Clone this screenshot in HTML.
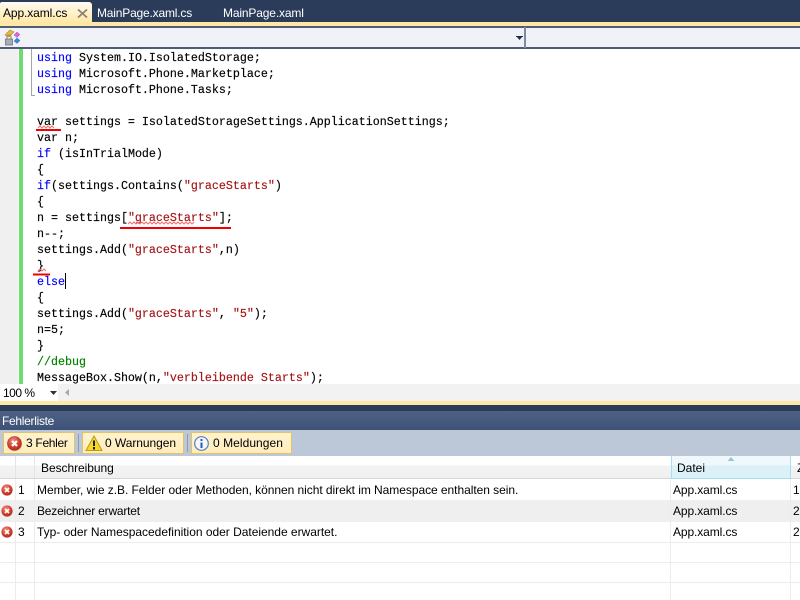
<!DOCTYPE html>
<html><head><meta charset="utf-8"><style>
html,body{margin:0;padding:0}
body{width:800px;height:600px;overflow:hidden;position:relative;background:#fff;font-family:"Liberation Sans",sans-serif;font-size:12px;color:#000}
.a{position:absolute}
.t{position:absolute;white-space:pre;line-height:16px}
.c{position:absolute;left:37px;white-space:pre;font-family:"Liberation Mono",monospace;font-size:11.67px;line-height:16px;height:16px;color:#000;-webkit-text-stroke:.15px currentColor}
.k{color:#0000ff}.s{color:#a31515}.g{color:#008000}
.btn{position:absolute;top:432px;height:22px;background:linear-gradient(#fff3cf,#ffecbd);border:1px solid #e5c365;box-sizing:border-box}
.hl{position:absolute;left:0;width:800px;height:1px;background:#ececec}
.vl{position:absolute;width:1px;top:479px;height:121px;background:#ececec}
.f{letter-spacing:-.1px}
</style></head><body>
<div class="a" style="left:0;top:0;width:800px;height:22px;background:#2b3c5a"></div>
<div class="a" style="left:0;top:22px;width:800px;height:4px;background:#ffe8a6"></div>
<div class="a" style="left:0;top:2px;width:92px;height:20px;background:linear-gradient(#fffcf4,#ffe8a6);border-radius:2px 3px 0 0"></div>
<div class="t f" style="left:3px;top:5px;color:#000">App.xaml.cs</div>
<svg class="a" style="left:77px;top:8px" width="11" height="11"><path d="M1 1.5L10 9.5M10 1.5L1 9.5" stroke="#8c8270" stroke-width="1.8"/></svg>
<div class="t" style="left:97px;top:5px;color:#fff;letter-spacing:-.19px">MainPage.xaml.cs</div>
<div class="t" style="left:223px;top:5px;color:#fff;letter-spacing:-.15px">MainPage.xaml</div>

<div class="a" style="left:0;top:26px;width:800px;height:23px;background:#f0f2f8;border-top:2px solid #4e5c7a;border-bottom:2px solid #4e5c7a;box-sizing:border-box"></div>
<div class="a" style="left:524px;top:27px;width:2px;height:21px;background:#7f8aa3"></div>
<svg class="a" style="left:516px;top:36px" width="7" height="5"><path d="M0 0H7V1H6L3.5 4L1 1H0Z" fill="#1f2a44"/></svg>
<svg class="a" style="left:4px;top:29px" width="18" height="17">
<path d="M1 6L6 1L10 3L5 8Z" fill="#eebb30" stroke="#b08a20" stroke-width=".6"/>
<path d="M13 3l3 2.5-3 3-3-2.5Z" fill="#d868d8" stroke="#a040a0" stroke-width=".4"/>
<path d="M13 9l3 2.5-3 3-3-2.5Z" fill="#3a8ad8" stroke="#2060a0" stroke-width=".4"/>
<rect x="1.5" y="10" width="7" height="6" fill="#a8aeb6" stroke="#666" stroke-width=".7"/>
<path d="M3 10V8a2 2 0 0 1 4 0v2" fill="none" stroke="#808080" stroke-width="1"/>
</svg>

<div class="a" style="left:0;top:49px;width:18px;height:335px;background:#f0f0f0"></div>
<div class="a" style="left:19px;top:49px;width:4px;height:335px;background:#6fdc6f"></div>
<div class="a" style="left:31px;top:49px;width:1px;height:47px;background:#a5a5a5"></div>
<div class="a" style="left:31px;top:95px;width:4px;height:1px;background:#a5a5a5"></div>

<div class="c" style="top:50px"><span class="k">using</span> System.IO.IsolatedStorage;</div>
<div class="c" style="top:66px"><span class="k">using</span> Microsoft.Phone.Marketplace;</div>
<div class="c" style="top:82px"><span class="k">using</span> Microsoft.Phone.Tasks;</div>
<div class="c" style="top:114px">var settings = IsolatedStorageSettings.ApplicationSettings;</div>
<div class="c" style="top:130px">var n;</div>
<div class="c" style="top:146px"><span class="k">if</span> (isInTrialMode)</div>
<div class="c" style="top:162px">{</div>
<div class="c" style="top:178px"><span class="k">if</span>(settings.Contains(<span class="s">"graceStarts"</span>)</div>
<div class="c" style="top:194px">{</div>
<div class="c" style="top:210px">n = settings[<span class="s">"graceStarts"</span>];</div>
<div class="c" style="top:226px">n--;</div>
<div class="c" style="top:242px">settings.Add(<span class="s">"graceStarts"</span>,n)</div>
<div class="c" style="top:258px">}</div>
<div class="c" style="top:274px"><span class="k">else</span></div>
<div class="c" style="top:290px">{</div>
<div class="c" style="top:306px">settings.Add(<span class="s">"graceStarts"</span>, <span class="s">"5"</span>);</div>
<div class="c" style="top:322px">n=5;</div>
<div class="c" style="top:338px">}</div>
<div class="c" style="top:354px"><span class="g">//debug</span></div>
<div class="c" style="top:370px">MessageBox.Show(n,<span class="s">"verbleibende Starts"</span>);</div>
<div class="a" style="left:65px;top:273px;width:1px;height:16px;background:#000"></div>

<svg class="a" style="left:0;top:48px" width="300" height="260">
<path d="M38 80l2 -2 2 2 2 -2 2 2 2 -2 2 2 2 -2 2 2" fill="none" stroke="#ee7070" stroke-width="1"/>
<path d="M36 82H61" stroke="#f00000" stroke-width="2"/>
<path d="M128 176l2 -2 2 2 2 -2 2 2 2 -2 2 2 2 -2 2 2 2 -2 2 2 2 -2 2 2 2 -2 2 2 2 -2 2 2 2 -2 2 2 2 -2 2 2 2 -2 2 2 2 -2 2 2 2 -2 2 2 2 -2 2 2 2 -2 2 2 2 -2 2 2 2 -2" fill="none" stroke="#ee7070" stroke-width="1"/>
<path d="M120 180H231" stroke="#f00000" stroke-width="2"/>
<path d="M38 223l2 -2 2 2 2 -2 2 2" fill="none" stroke="#ee7070" stroke-width="1"/>
<path d="M33 226.5H50" stroke="#f00000" stroke-width="2"/>
</svg>

<div class="a" style="left:0;top:384px;width:800px;height:17px;background:#f2f2f2"></div>
<div class="a" style="left:0;top:384px;width:58px;height:17px;background:#fff"></div>
<div class="t" style="left:3px;top:385px;letter-spacing:-.5px">100 %</div>
<svg class="a" style="left:50px;top:391px" width="7" height="5"><path d="M0 0H7L3.5 4Z" fill="#333"/></svg>
<svg class="a" style="left:65px;top:389px" width="5" height="8"><path d="M4 0V7L0 3.5Z" fill="#a8a8a8"/></svg>

<div class="a" style="left:0;top:401px;width:800px;height:4px;background:#ffe8a6"></div>
<div class="a" style="left:0;top:405px;width:800px;height:6px;background:#2b3c5a"></div>
<div class="a" style="left:0;top:411px;width:800px;height:19px;background:linear-gradient(#4e6185,#3e5278)"></div>
<div class="t" style="left:2px;top:413px;color:#fff;letter-spacing:-.3px">Fehlerliste</div>
<div class="a" style="left:0;top:430px;width:800px;height:26px;background:#bcc7d8"></div>

<svg width="0" height="0" style="position:absolute"><defs><radialGradient id="e" cx=".4" cy=".3" r=".8"><stop offset="0" stop-color="#f09080"/><stop offset=".55" stop-color="#d04030"/><stop offset="1" stop-color="#a82818"/></radialGradient></defs></svg>

<div class="btn" style="left:3px;width:72px"></div>
<svg class="a" style="left:7px;top:436px" width="15" height="15"><circle cx="7.5" cy="7.5" r="7" fill="url(#e)" stroke="#a02c20" stroke-width=".6"/><path d="M5 5L10 10M10 5L5 10" stroke="#fff" stroke-width="2.2"/></svg>
<div class="t" style="left:26px;top:435px;letter-spacing:-.3px">3 Fehler</div>
<div class="a" style="left:78px;top:434px;width:1px;height:18px;background:#8e9bb0"></div>
<div class="btn" style="left:82px;width:102px"></div>
<svg class="a" style="left:85px;top:435px" width="18" height="17"><path d="M9 1L17 15.5H1Z" fill="#f8d820" stroke="#b89a20" stroke-width="1"/><path d="M9 5.5V11M9 12V14.5" stroke="#222" stroke-width="2"/></svg>
<div class="t" style="left:105px;top:435px;letter-spacing:-.05px">0 Warnungen</div>
<div class="a" style="left:187px;top:434px;width:1px;height:18px;background:#8e9bb0"></div>
<div class="btn" style="left:191px;width:101px"></div>
<svg class="a" style="left:194px;top:436px" width="15" height="15"><circle cx="7.5" cy="7.5" r="6.8" fill="#f4f7fc" stroke="#5a80c0" stroke-width="1.2"/><path d="M7.5 3V5M7.5 6.5V12" stroke="#2a5ab0" stroke-width="2"/></svg>
<div class="t" style="left:213px;top:435px;letter-spacing:.05px">0 Meldungen</div>

<div class="a" style="left:0;top:456px;width:800px;height:22px;background:linear-gradient(#fff 0,#fff 40%,#f3f3f3 45%,#f0f0f0 100%)"></div>
<div class="a" style="left:0;top:478px;width:800px;height:1px;background:#d5d5d5"></div>
<div class="a" style="left:15px;top:456px;width:1px;height:22px;background:#e4e4e4"></div>
<div class="a" style="left:34px;top:456px;width:1px;height:22px;background:#e4e4e4"></div>
<div class="t" style="left:41px;top:460px;letter-spacing:-.05px">Beschreibung</div>
<div class="a" style="left:671px;top:456px;width:120px;height:23px;box-sizing:border-box;border:1px solid #a5ddf4;border-top:0;background:linear-gradient(#f0f8fc 0,#f0f8fc 40%,#dcf0f8 45%,#dcf0f8 100%)"></div>
<div class="a" style="left:791px;top:456px;width:9px;height:22px;background:linear-gradient(#fff 0,#fff 40%,#f3f3f3 45%,#f0f0f0 100%)"></div>
<svg class="a" style="left:727px;top:457px" width="8" height="5"><path d="M4 0L7.5 4H.5Z" fill="#9cc4dc"/></svg>
<div class="t" style="left:677px;top:460px">Datei</div>
<div class="t" style="left:797px;top:460px">Z</div>

<div class="a" style="left:0;top:500px;width:800px;height:22px;background:#efefef"></div>
<div class="hl" style="top:542px"></div>
<div class="hl" style="top:562px"></div>
<div class="hl" style="top:582px"></div>
<div class="vl" style="left:15px"></div>
<div class="vl" style="left:34px"></div>
<div class="vl" style="left:670px"></div>
<div class="vl" style="left:790px"></div>

<svg class="a" style="left:1px;top:484px" width="12" height="12"><circle cx="6" cy="6" r="5.6" fill="url(#e)"/><path d="M4 4L8 8M8 4L4 8" stroke="#fff" stroke-width="1.7"/></svg>
<svg class="a" style="left:1px;top:505px" width="12" height="12"><circle cx="6" cy="6" r="5.6" fill="url(#e)"/><path d="M4 4L8 8M8 4L4 8" stroke="#fff" stroke-width="1.7"/></svg>
<svg class="a" style="left:1px;top:526px" width="12" height="12"><circle cx="6" cy="6" r="5.6" fill="url(#e)"/><path d="M4 4L8 8M8 4L4 8" stroke="#fff" stroke-width="1.7"/></svg>

<div class="t" style="left:18px;top:482px">1</div>
<div class="t" style="left:37px;top:482px;letter-spacing:-.05px">Member, wie z.B. Felder oder Methoden, können nicht direkt im Namespace enthalten sein.</div>
<div class="t f" style="left:673px;top:482px">App.xaml.cs</div>
<div class="t" style="left:793px;top:482px">19</div>
<div class="t" style="left:18px;top:503px">2</div>
<div class="t" style="left:37px;top:503px;letter-spacing:-.2px">Bezeichner erwartet</div>
<div class="t f" style="left:673px;top:503px">App.xaml.cs</div>
<div class="t" style="left:793px;top:503px">21</div>
<div class="t" style="left:18px;top:524px">3</div>
<div class="t" style="left:37px;top:524px;letter-spacing:-.02px">Typ- oder Namespacedefinition oder Dateiende erwartet.</div>
<div class="t f" style="left:673px;top:524px">App.xaml.cs</div>
<div class="t" style="left:793px;top:524px">28</div>
</body></html>
